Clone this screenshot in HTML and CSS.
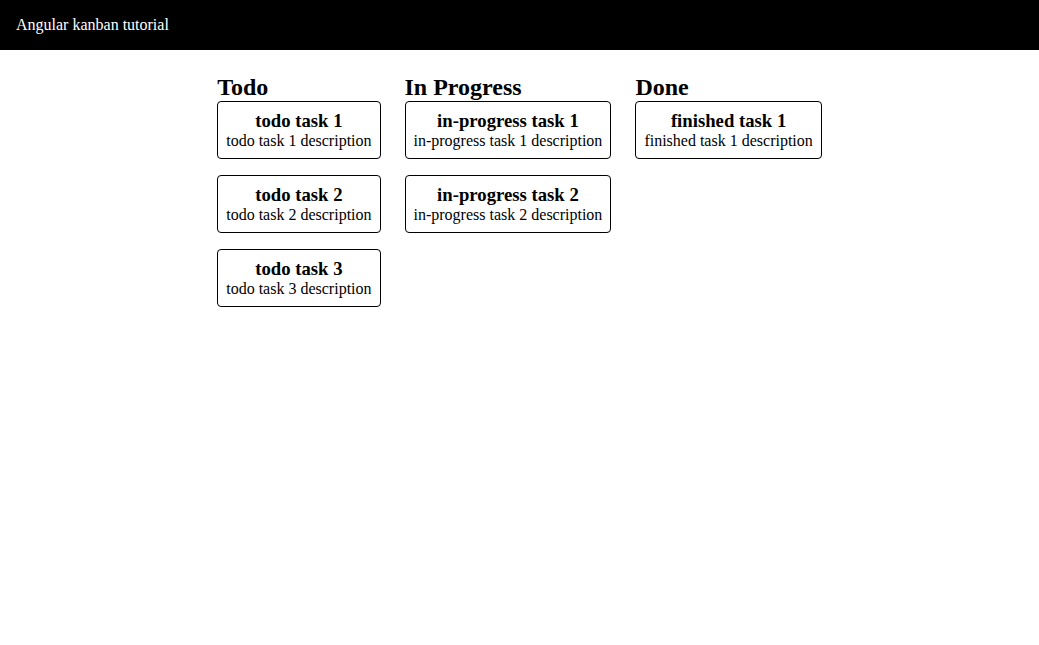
FILE: index.html
```html
<!DOCTYPE html>
<html lang="en">
<head>
  <meta charset="UTF-8">
  <meta name="viewport" content="width=device-width, initial-scale=1.0">
  <title>Angular kanban tutorial</title>
  <link rel="stylesheet" href="styles.css">
</head>
<body>
  <div class="toolbar">Angular kanban tutorial</div>

  <div class="board">
    <div class="column">
      <h2 class="column-title">Todo</h2>
      <div class="task">
        <h3 class="task-title">todo task 1</h3>
        <div class="task-desc">todo task 1 description</div>
      </div>
      <div class="task">
        <h3 class="task-title">todo task 2</h3>
        <div class="task-desc">todo task 2 description</div>
      </div>
      <div class="task">
        <h3 class="task-title">todo task 3</h3>
        <div class="task-desc">todo task 3 description</div>
      </div>
    </div>
    <div class="column">
      <h2 class="column-title">In Progress</h2>
      <div class="task">
        <h3 class="task-title">in-progress task 1</h3>
        <div class="task-desc">in-progress task 1 description</div>
      </div>
      <div class="task">
        <h3 class="task-title">in-progress task 2</h3>
        <div class="task-desc">in-progress task 2 description</div>
      </div>
    </div>
    <div class="column">
      <h2 class="column-title">Done</h2>
      <div class="task">
        <h3 class="task-title">finished task 1</h3>
        <div class="task-desc">finished task 1 description</div>
      </div>
    </div>
  </div>
</body>
</html>
```

FILE: styles.css
```css
body {
  font-family: 'Liberation Serif', 'Times New Roman', serif;
  margin: 0;
  padding: 0;
  color: #000;
}

.toolbar {
  background-color: #000;
  color: #fff;
  padding: 16px;
  font-size: 16px;
}

.board {
  display: flex;
  justify-content: center;
  align-items: flex-start;
  gap: 24px;
  padding-top: 24px;
}

.column {
  display: flex;
  flex-direction: column;
}

.column-title {
  font-size: 24px;
  font-weight: bold;
  margin: 0;
}

.task {
  border: 1px solid #000;
  border-radius: 4px;
  padding: 8px;
  margin-bottom: 16px;
  text-align: center;
}

.task-title {
  font-size: 18.72px;
  font-weight: bold;
  margin: 0;
}

.task-desc {
  font-size: 16px;
}
```
